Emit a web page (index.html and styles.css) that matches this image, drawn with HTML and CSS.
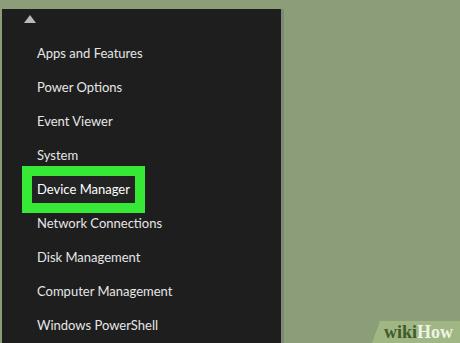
FILE: index.html
```html
<!DOCTYPE html>
<html lang="en">
<head>
    <meta charset="UTF-8">
    <meta name="viewport" content="width=device-width, initial-scale=1.0">
    <title>Power User Menu</title>
    <link rel="stylesheet" href="styles.css">
</head>
<body>
    <div class="menu">
        <div class="menu-top">
            <span class="arrow"></span>
        </div>
        <ul class="items">
            <li><span>Apps and Features</span></li>
            <li><span>Power Options</span></li>
            <li><span>Event Viewer</span></li>
            <li><span>System</span></li>
            <li class="selected"><span>Device Manager</span></li>
            <li><span>Network Connections</span></li>
            <li><span>Disk Management</span></li>
            <li><span>Computer Management</span></li>
            <li><span>Windows PowerShell</span></li>
        </ul>
    </div>

    <div class="watermark">
        <span class="wiki">wiki</span><span class="how">How</span>
    </div>
</body>
</html>
```

FILE: styles.css
```css
/* Menu sur fond vert */
html, body {
    height: 100%;
}
body {
    margin: 0;
    background-color: #8b9d79;
    font-family: Lato, "Noto Sans", sans-serif;
    overflow: hidden;
}
.menu {
    width: 279px;
    height: 340px;
    margin: 9px 0 0 2px;
    background-color: #1e1e1e;
    box-shadow: 3px 0 0 #7f8a76;
}
.menu-top {
    height: 27px;
    padding-left: 22px;
    box-sizing: border-box;
    padding-top: 6px;
}
.arrow {
    display: block;
    width: 0;
    height: 0;
    border-left: 6px solid transparent;
    border-right: 6px solid transparent;
    border-bottom: 8px solid #b9b9b9;
}
.items {
    list-style: none;
    margin: 0;
    padding: 0 0 0 30px;
}
.items li {
    height: 34px;
    display: flex;
    align-items: center;
    color: #e6e6e6;
    font-size: 13px;
}
.items li span {
    padding: 0 5px;
    line-height: 27px;
}
.items li.selected span {
    background-color: #232323;
    color: #ffffff;
    outline: 10px solid #38e836;
}
.watermark {
    position: absolute;
    right: 0;
    bottom: 0;
    width: 88px;
    height: 22px;
    background-color: #a0b783;
    clip-path: polygon(8px 0, 100% 0, 100% 100%, 0 100%);
    font-family: "Liberation Serif", "DejaVu Serif", serif;
    font-weight: bold;
    font-size: 18px;
    line-height: 22px;
    padding-left: 12px;
    box-sizing: border-box;
}
.wiki {
    color: #3f5a2b;
}
.how {
    color: #eef3e6;
}
```
